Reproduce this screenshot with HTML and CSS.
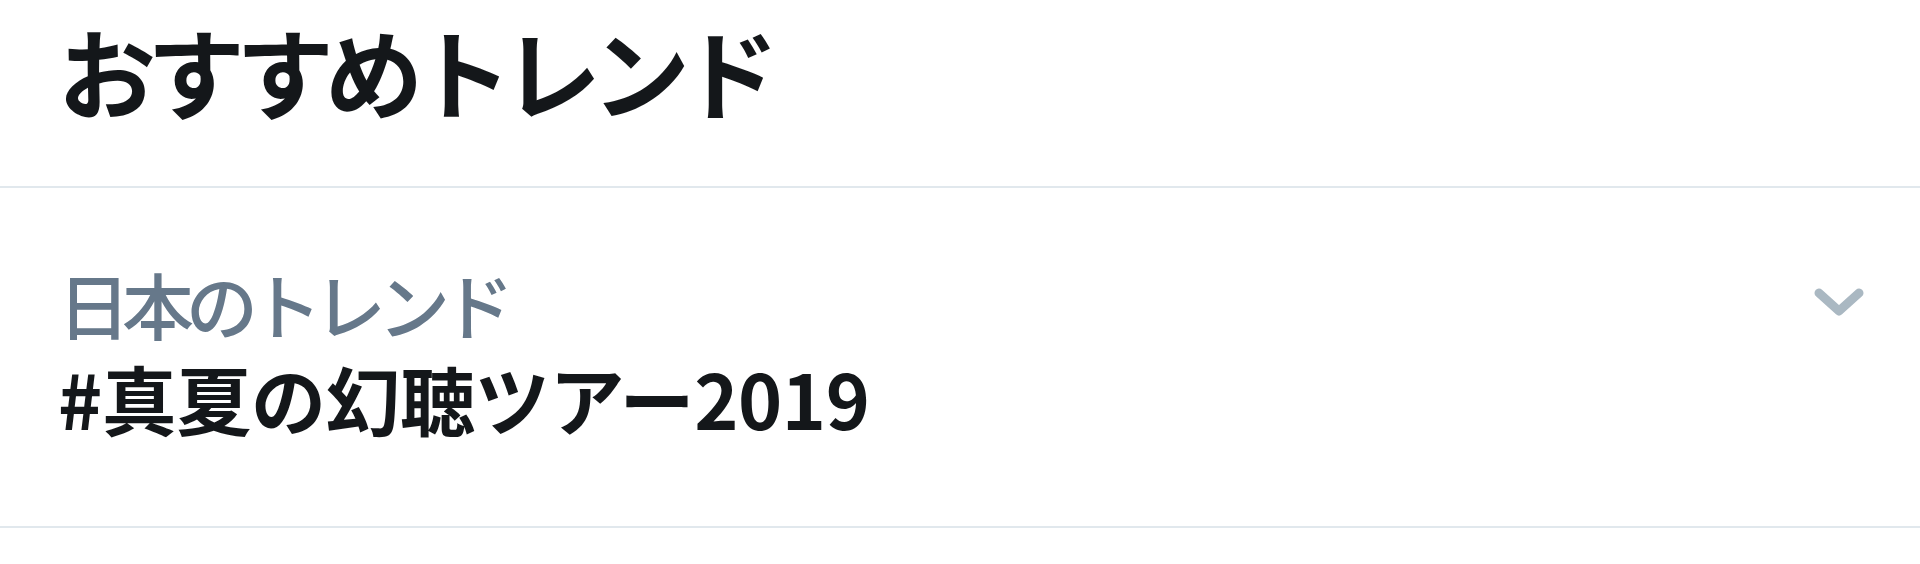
FILE: index.html
```html
<!DOCTYPE html>
<html>
<head>
    <title>おすすめトレンド</title>
    <meta charset="UTF-8">
    <link rel="stylesheet" href="styles.css">
</head>
<body>
    <div class="panel">
        <h2 class="panel-title">おすすめトレンド</h2>

        <div class="trend">
            <div class="trend-text">
                <div class="trend-context">日本のトレンド</div>
                <div class="trend-name">#真夏の幻聴ツアー2019</div>
            </div>
            <!-- 折りたたみ用の矢印 -->
            <svg class="trend-caret" width="50" height="28" viewBox="0 0 50 28">
                <path d="M5 5 L25 23 L45 5" fill="none" stroke="#aab8c2" stroke-width="9" stroke-linecap="round" stroke-linejoin="round"/>
            </svg>
        </div>
    </div>
</body>
</html>
```

FILE: styles.css
```css
body { margin: 0; background: #fff; font-family: "Noto Sans CJK JP", "Noto Sans", sans-serif; color: #14171a; }
.panel { width: 100%; }
.panel-title { margin: 0; padding: 9px 58px 0; height: 177px; font-size: 98px; font-weight: 700; line-height: 120px; letter-spacing: -9px; border-bottom: 2px solid #e1e8ed; }
.trend { display: flex; align-items: flex-start; justify-content: space-between; padding: 70px 56px 0 58px; height: 268px; border-bottom: 2px solid #e1e8ed; }
.trend-context { font-size: 72px; line-height: 90px; font-weight: 500; letter-spacing: -8px; color: #66788a; }
.trend-name { font-size: 75px; line-height: 100px; font-weight: 700; letter-spacing: -0.4px; }
.trend-caret { margin-top: 30px; }
```
